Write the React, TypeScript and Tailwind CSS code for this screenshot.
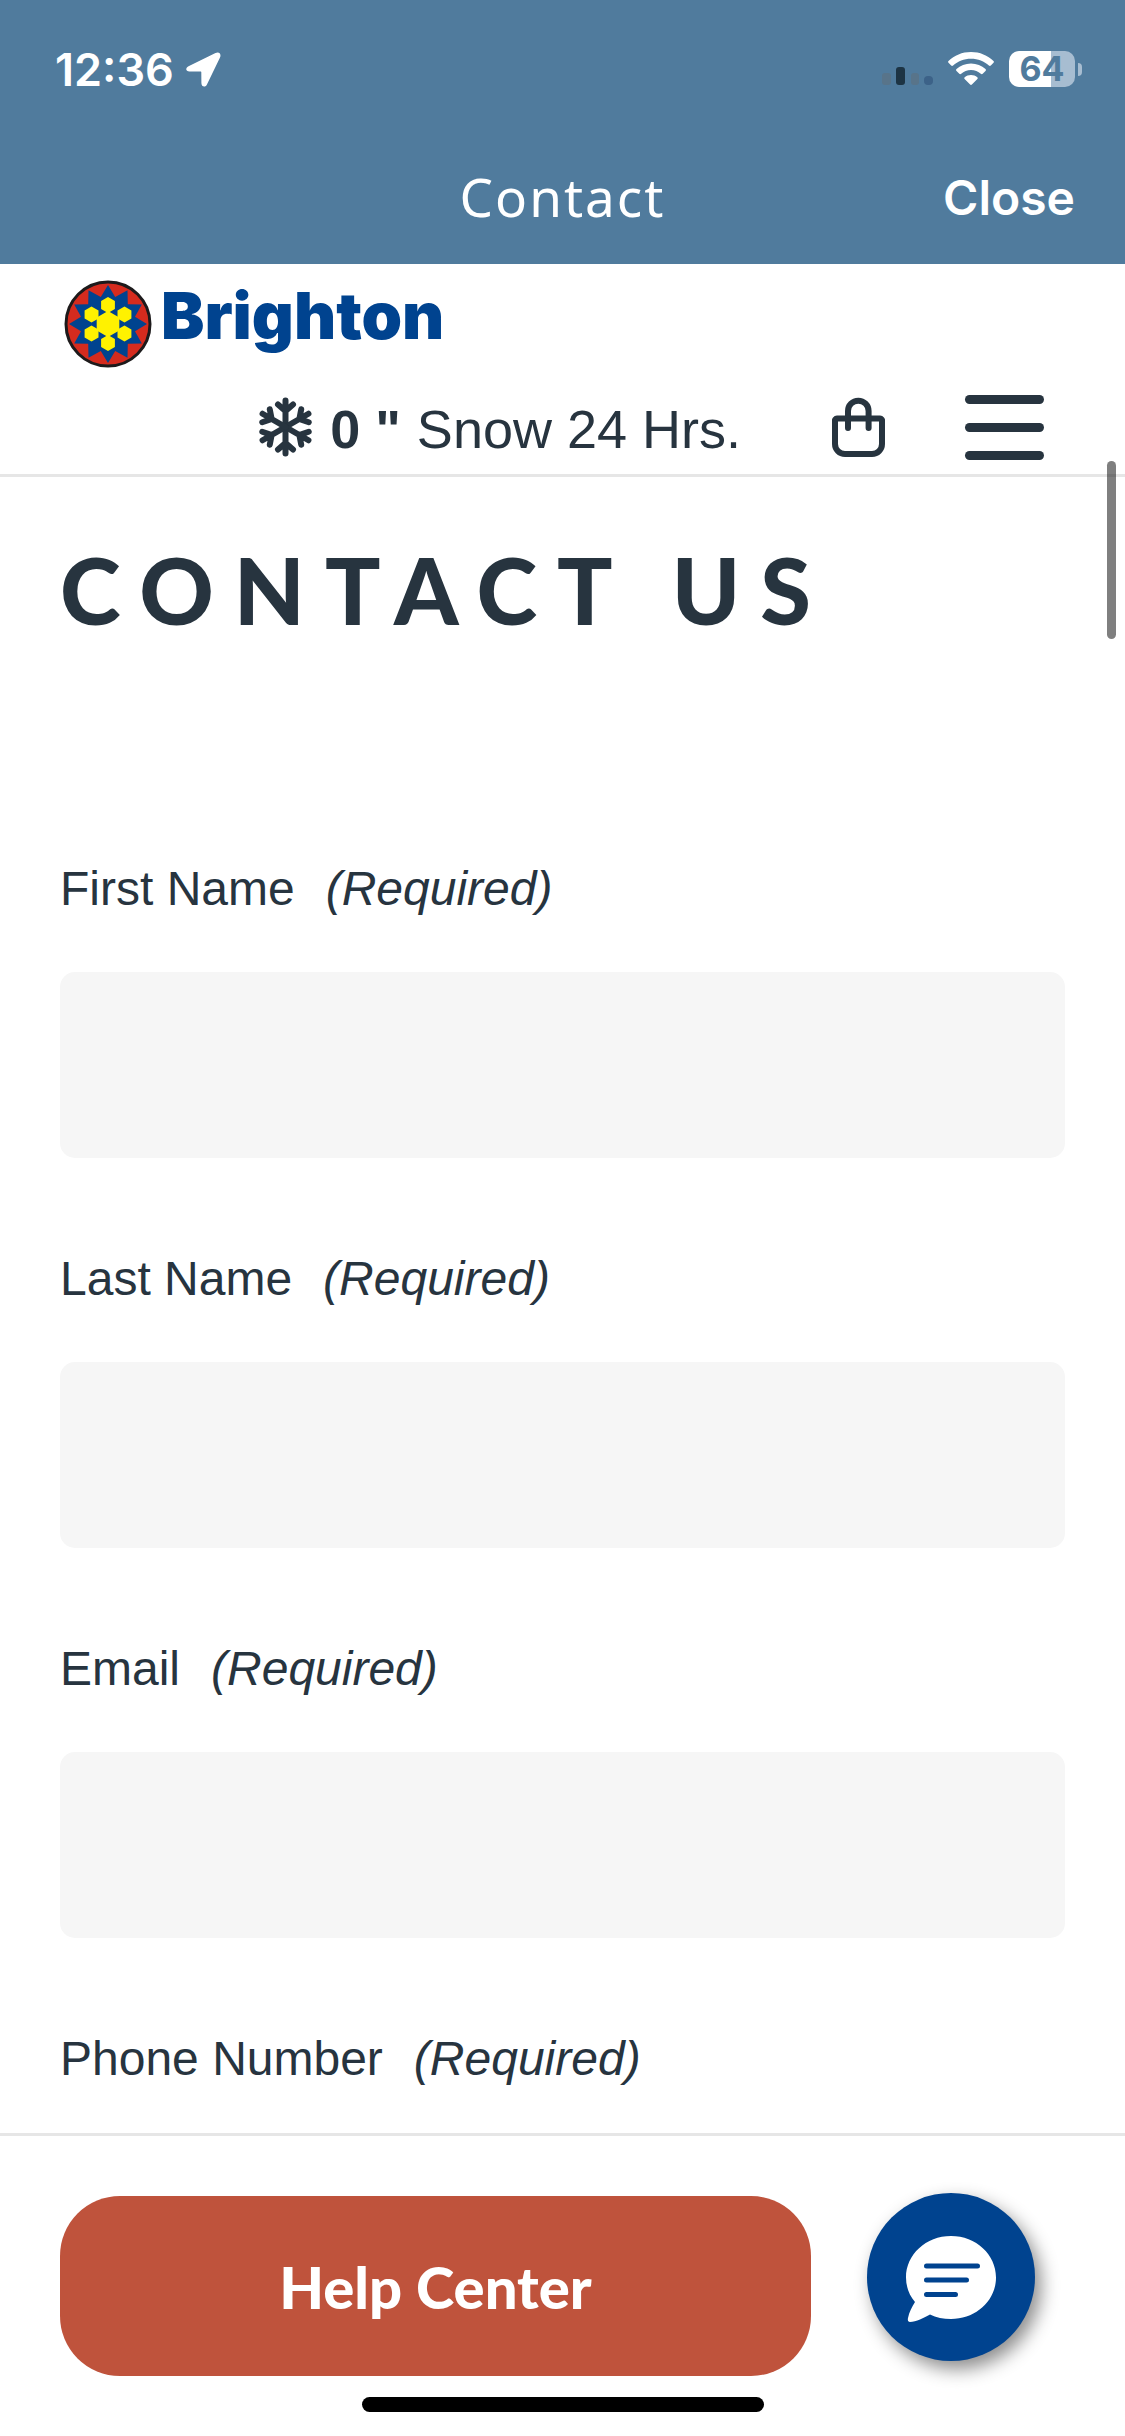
const NAVY = "#00438f"

const fields = [
  { id: "first-name", label: "First Name", type: "text" },
  { id: "last-name", label: "Last Name", type: "text" },
  { id: "email", label: "Email", type: "email" },
  { id: "phone", label: "Phone Number", type: "tel" },
]

// Regular polygon / star points around a centre, first vertex pointing up
function ring(cx: number, cy: number, count: number, outer: number, inner = outer) {
  return Array.from({ length: count }, (_, i) => {
    const r = i % 2 === 0 ? outer : inner
    const a = (i * 2 * Math.PI) / count - Math.PI / 2
    return `${(cx + r * Math.cos(a)).toFixed(1)},${(cy + r * Math.sin(a)).toFixed(1)}`
  }).join(" ")
}

function Emblem() {
  return (
    <svg viewBox="0 0 88 88" className="size-[88px] shrink-0" aria-hidden="true">
      <circle cx="44" cy="44" r="42" fill="#d52b1e" stroke="#1d1a1b" strokeWidth="3" />
      <polygon points={ring(44, 44, 24, 39, 28)} fill={NAVY} />
      <polygon points={ring(44, 44, 6, 13)} fill="#fff200" />
      {[0, 1, 2, 3, 4, 5].map((i) => {
        const a = (i * Math.PI) / 3 - Math.PI / 2
        return (
          <polygon
            key={i}
            points={ring(44 + 19 * Math.cos(a), 44 + 19 * Math.sin(a), 6, 8)}
            fill="#fff200"
          />
        )
      })}
    </svg>
  )
}

function SnowflakeIcon() {
  return (
    <svg viewBox="0 0 53 60" className="mr-[18px] h-[60px] w-[53px]" fill="none" stroke="currentColor" strokeWidth="6" strokeLinecap="round" aria-hidden="true">
      {[0, 60, 120, 180, 240, 300].map((angle) => (
        <path key={angle} d="M26.500 30V3.500M19 7.500l7.500 6.500 7.500-6.500" transform={`rotate(${angle} 26.500 30)`} />
      ))}
    </svg>
  )
}

function StatusBar() {
  return (
    <div className="flex h-[138px] items-center justify-between pr-[43px] pl-[55px]">
      <div className="flex items-center gap-3">
        <span className="text-[45px] leading-none font-semibold">12:36</span>
        <svg viewBox="0 0 35 35" className="size-[35px]" fill="currentColor" aria-hidden="true">
          <path d="M29.500 1 3 14c-4 2-3.500 5.300.5 5.400l11 .1c.6 0 .8.2.8.8l.1 10.700c0 4.200 4.200 4.900 5.800 1L34 5.500C35.600 1.800 33-.7 29.500 1z" />
        </svg>
      </div>
      <div className="flex items-center gap-[15px]">
        <svg viewBox="0 0 51 36" className="h-9 w-[51px]" aria-hidden="true">
          <rect x="0" y="22" width="9" height="12" rx="3" fill="#58748a" />
          <rect x="14" y="16" width="9" height="18" rx="3" fill="#1d3444" />
          <rect x="29" y="22" width="8" height="12" rx="3" fill="#58748a" />
          <rect x="42" y="25" width="9" height="9" rx="4" fill="#3c6288" />
        </svg>
        <svg viewBox="0 0 46 36" className="h-9 w-[46px]" fill="currentColor" aria-hidden="true">
          <path d="M23 1C14.200 1 6.300 4.400.5 9.900c-.6.600-.6 1.300 0 1.900l2.700 2.700c.5.500 1.300.5 1.900 0C9.800 10.200 16 7.700 23 7.700s13.200 2.500 17.900 6.800c.6.500 1.400.5 1.900 0l2.700-2.700c.6-.6.6-1.300 0-1.900C39.700 4.400 31.800 1 23 1z" />
          <path d="M23 12.500c-5.600 0-10.700 2.100-14.500 5.600-.6.600-.6 1.300 0 1.900l2.800 2.800c.5.500 1.300.5 1.900 0 2.600-2.300 6-3.700 9.800-3.700s7.200 1.400 9.800 3.700c.6.500 1.400.5 1.900 0l2.800-2.800c.6-.6.6-1.300 0-1.900-3.800-3.500-8.900-5.600-14.500-5.600z" />
          <path d="M23 24c-2.400 0-4.600.8-6.300 2.200-.6.500-.6 1.200-.1 1.700l5.500 5.700c.5.500 1.300.5 1.800 0l5.500-5.700c.5-.5.500-1.200-.1-1.700C27.600 24.800 25.400 24 23 24z" />
        </svg>
        <div className="flex items-center gap-[3px]">
          <div className="flex h-9 w-[66px] items-center justify-center rounded-[10px] bg-linear-to-r from-white from-64% to-[#a7bdd1] to-64% text-[34px] leading-none font-bold text-[#507b9d]">
            64
          </div>
          <div className="h-[13px] w-1 rounded-r-full bg-[#a7bdd1]" />
        </div>
      </div>
    </div>
  )
}

function AppHeader() {
  return (
    <header className="shrink-0 bg-[#507b9d] font-[Inter,sans-serif] text-white">
      <StatusBar />
      <div className="grid h-[126px] grid-cols-[1fr_auto_1fr] items-start px-[50px] pt-[27px]">
        <h1 className="col-start-2 font-['Noto_Sans',sans-serif] text-[53px] leading-[64px] tracking-[2px]">
          Contact
        </h1>
        <button type="button" className="justify-self-end text-[48px] leading-[66px] font-semibold">
          Close
        </button>
      </div>
    </header>
  )
}

function SiteNav() {
  return (
    <div className="shrink-0 border-b-3 border-[#e6e6e6] pt-4">
      <a href="#home" className="ml-16 flex h-[88px] w-fit items-start gap-[9px]">
        <Emblem />
        <span className="font-[Inter,sans-serif] text-[65px] leading-[72px] font-black text-[#00438f]">
          Brighton
        </span>
      </a>
      <div className="flex h-[106px] items-center justify-end pt-3 pr-[81px]">
        <SnowflakeIcon />
        <p className="mr-[91px] pt-[3px] text-[54px] leading-[60px]">
          <strong className="mr-4">0 "</strong>
          Snow 24 Hrs.
        </p>
        <button type="button" aria-label="Cart" className="mr-20">
          <svg viewBox="0 0 53 60" className="h-[60px] w-[53px]" fill="none" stroke="currentColor" strokeWidth="6" strokeLinecap="round" aria-hidden="true">
            <path d="M5 21.500h43a2 2 0 0 1 2 2.500v23a10 10 0 0 1-10 10H13a10 10 0 0 1-10-10V24a2 2 0 0 1 2-2.500z" />
            <path d="M16 31V14a10.300 10.300 0 0 1 20.600 0v17" />
          </svg>
        </button>
        <button type="button" aria-label="Menu" className="flex w-[79px] flex-col gap-[19px]">
          <span className="h-[9px] rounded-full bg-current" />
          <span className="h-[9px] rounded-full bg-current" />
          <span className="h-[9px] rounded-full bg-current" />
        </button>
      </div>
    </div>
  )
}

function ContactForm() {
  return (
    <main className="min-h-0 flex-1 overflow-y-auto px-[60px] pt-[57px] [scrollbar-width:none]">
      <h2 className="font-[Lato,sans-serif] text-[92px] leading-[112px] font-black tracking-[20px] uppercase">
        Contact Us
      </h2>
      <form className="mt-[206px] flex flex-col gap-[84px]">
        {fields.map((field) => (
          <div key={field.id} className="flex flex-col gap-[46px]">
            <label htmlFor={field.id} className="text-[48px] leading-[74px]">
              {field.label}
              <em className="ml-[31px]">(Required)</em>
            </label>
            <input
              id={field.id}
              type={field.type}
              required
              className="h-[186px] w-full rounded-[15px] bg-[#f6f6f6] px-8 text-[48px] outline-none"
            />
          </div>
        ))}
      </form>
    </main>
  )
}

function HelpBar() {
  return (
    <footer className="relative shrink-0 border-t-3 border-[#e6e6e6] bg-white pt-[60px] pb-6">
      <div className="pr-[314px] pl-[60px]">
        <button
          type="button"
          className="h-[180px] w-full rounded-[60px] bg-[#bf533c] font-[Lato,sans-serif] text-[58px] font-black text-white"
        >
          Help Center
        </button>
      </div>
      <div className="mx-auto mt-[21px] h-[15px] w-[402px] rounded-full bg-black" />
      <button
        type="button"
        aria-label="Open chat"
        className="absolute top-[57px] right-[90px] flex size-[168px] items-center justify-center rounded-full bg-[#00438f] pt-1 shadow-[6px_8px_18px_rgba(0,0,0,0.45)]"
      >
        <svg viewBox="0 0 90 86" className="h-[86px] w-[90px]" aria-hidden="true">
          <path d="M45 0c25 0 45 18.500 45 41.500S70 83 45 83c-7.500 0-15-1.500-21-4.500C18 81.500 10 86 4 86c-2 0-2.500-1.500-2-4 1-6 4-11 7-16C3 59 0 50.500 0 41.500 0 18.500 20 0 45 0z" fill="#fff" />
          <path d="M20.500 30h51M20.500 44h40M20.500 58.500h29" stroke={NAVY} strokeWidth="5" strokeLinecap="round" />
        </svg>
      </button>
    </footer>
  )
}

export default function App() {
  return (
    <div className="relative flex h-screen flex-col bg-white font-['Liberation_Sans',Arial,sans-serif] text-[#27343f]">
      <AppHeader />
      <SiteNav />
      <ContactForm />
      <HelpBar />
      {/* Scroll position indicator */}
      <div className="absolute top-[461px] right-[9px] h-[178px] w-[9px] rounded-full bg-black/50" />
    </div>
  )
}
